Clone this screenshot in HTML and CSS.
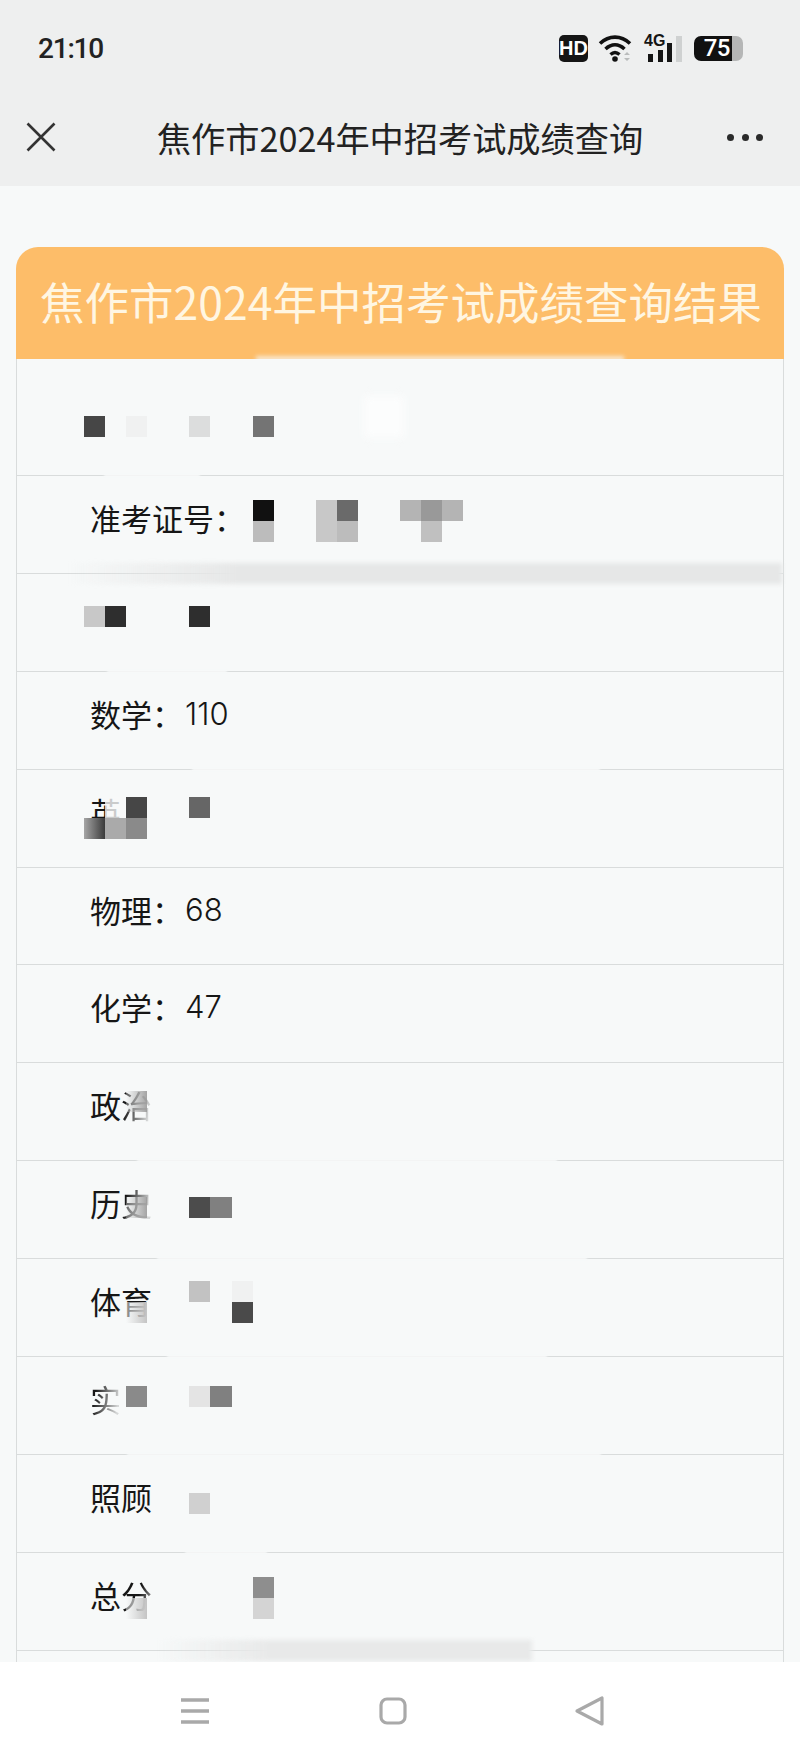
FILE: index.html
```html
<!DOCTYPE html>
<html lang="zh-CN">
<head>
    <meta charset="UTF-8">
    <meta name="viewport" content="width=device-width, initial-scale=1.0">
    <title>焦作市2024年中招考试成绩查询</title>
    <link rel="stylesheet" href="styles.css">
</head>
<body>

<div class="phone">
    <!-- Status bar -->
    <div class="status-bar">
        <span class="clock">21:10</span>
        <div class="status-icons">
            <span class="hd-badge">HD</span>
            <svg class="wifi-icon" width="36" height="30" viewBox="0 0 36 30">
                <path d="M2 10.5C11 2 23 2 32 10.5" fill="none" stroke="#111" stroke-width="3.6"/>
                <path d="M7.5 16C13.5 10.5 20.5 10.5 26.5 16" fill="none" stroke="#111" stroke-width="3.6"/>
                <path d="M12.5 21.5C15.5 18.8 18.5 18.8 21.5 21.5" fill="none" stroke="#111" stroke-width="3.4"/>
                <circle cx="17" cy="26" r="2.8" fill="#111"/>
                <path d="M26 22l3-3 3 3zM26 25l3 3 3-3z" fill="#b9bbbb"/>
            </svg>
            <div class="signal">
                <span class="signal-type">4G</span>
                <i class="bar bar-1"></i>
                <i class="bar bar-2"></i>
                <i class="bar bar-3"></i>
                <i class="bar bar-4"></i>
            </div>
            <div class="battery">
                <span class="battery-level">75</span>
                <i class="battery-rest"></i>
            </div>
        </div>
    </div>

    <!-- Title bar -->
    <div class="nav-bar">
        <svg class="close-icon" width="30" height="30" viewBox="0 0 30 30">
            <path d="M1.5 1.5L28.5 28.5M28.5 1.5L1.5 28.5" fill="none" stroke="#333" stroke-width="2.6"/>
        </svg>
        <h1 class="nav-title">焦作市2024年中招考试成绩查询</h1>
        <div class="more-dots"><i></i><i></i><i></i></div>
    </div>

    <!-- Result table -->
    <div class="content">
        <div class="result-card">
            <div class="card-head">
                <h2>焦作市2024年中招考试成绩查询结果</h2>
                <i class="smear smear-head"></i>
            </div>

            <div class="score-row first-row">
                <div class="mosaic m-name">
                    <i class="c0 k44"></i><i class="c2 kf0"></i><i class="c5 kdc"></i><i class="c8 k74"></i>
                </div>
                <i class="smear smear-name"></i>
                <i class="gap gap-name"></i>
            </div>
            <div class="score-row">
                <span>准考证号：</span>
                <div class="mosaic m-ticket">
                    <i class="c8 k11"></i><i class="c8 r2 kbb"></i>
                    <i class="c11 kc8"></i><i class="c11 r2 kc8"></i>
                    <i class="c12 k6a"></i><i class="c12 r2 kbb"></i>
                    <i class="c15 kb4"></i><i class="c16 k99"></i><i class="c17 kb4"></i>
                    <i class="c16 r2 kc0"></i>
                </div>
                <i class="smear smear-ticket"></i>
            </div>
            <div class="score-row">
                <div class="mosaic m-chinese">
                    <i class="c0 kc8"></i><i class="c1 k2e"></i><i class="c5 k2e"></i>
                </div>
                <i class="gap gap-chinese"></i>
            </div>
            <div class="score-row">
                <span>数学：</span><span class="num">110</span>
                <i class="gap gap-math"></i>
            </div>
            <div class="score-row">
                <span>英</span>
                <div class="mosaic m-english">
                    <i class="c1 kfade-soft"></i><i class="c2 k44"></i><i class="c5 k66"></i>
                    <i class="c0 r2 kfade-dark"></i><i class="c1 r2 kaa"></i><i class="c2 r2 k8a"></i>
                </div>
            </div>
            <div class="score-row"><span>物理：</span><span class="num">68</span></div>
            <div class="score-row"><span>化学：</span><span class="num">47</span></div>
            <div class="score-row">
                <span>政<em class="fade-char">治</em></span>
                <div class="mosaic m-politics">
                    <i class="c2 kfade"></i>
                </div>
                <i class="gap gap-politics"></i>
            </div>
            <div class="score-row">
                <span>历<em class="fade-char">史</em></span>
                <div class="mosaic m-history">
                    <i class="c2 kfade"></i><i class="c5 k4c"></i><i class="c6 k80"></i>
                </div>
                <i class="gap gap-history"></i>
            </div>
            <div class="score-row">
                <span>体育</span>
                <div class="mosaic m-sports">
                    <i class="c5 kc2"></i><i class="c7 kf0"></i><i class="c7 r2 k4a"></i>
                    <i class="c2 r2 kfade-light"></i>
                </div>
                <i class="gap gap-sports"></i>
            </div>
            <div class="score-row">
                <span class="fade-char">实</span>
                <div class="mosaic m-lab">
                    <i class="c2 k88"></i><i class="c5 ke4"></i><i class="c6 k80"></i>
                </div>
                <i class="gap gap-lab"></i>
            </div>
            <div class="score-row">
                <span>照顾</span>
                <div class="mosaic m-care">
                    <i class="c5 kd0"></i>
                </div>
                <i class="gap gap-care"></i>
            </div>
            <div class="score-row">
                <span>总<em class="fade-char fade-char-soft">分</em></span>
                <div class="mosaic m-total">
                    <i class="c8 k8e"></i><i class="c8 r2 kd4"></i><i class="c2 r2 kfade-light"></i>
                </div>
                <i class="smear smear-total"></i>
            </div>
            <div class="score-row"></div>
        </div>
    </div>

    <!-- Android navigation -->
    <div class="system-nav">
        <svg width="28" height="26" viewBox="0 0 28 26">
            <path d="M0 2H28M0 13H28M0 24H28" fill="none" stroke="#a9a9a9" stroke-width="3.4"/>
        </svg>
        <svg width="28" height="28" viewBox="0 0 28 28">
            <rect x="2" y="2" width="24" height="24" rx="6" fill="none" stroke="#a9a9a9" stroke-width="3.2"/>
        </svg>
        <svg width="30" height="32" viewBox="0 0 30 32">
            <path d="M28 3V29L3 16Z" fill="none" stroke="#a9a9a9" stroke-width="3.2" stroke-linejoin="round"/>
        </svg>
    </div>
</div>

</body>
</html>
```

FILE: styles.css
```css
* {
    box-sizing: border-box;
}
body {
    margin: 0;
    font-family: "Noto Sans CJK SC", "Noto Sans", sans-serif;
    color: #1c1c1c;
}
.phone {
    display: flex;
    flex-direction: column;
    height: 100vh;
    overflow: hidden;
    background-color: #f7f9f9;
}

/* status bar */
.status-bar {
    display: flex;
    align-items: center;
    justify-content: space-between;
    height: 92px;
    padding: 4px 57px 0 38px;
    background-color: #eeefef;
}
.clock {
    font-family: Roboto, sans-serif;
    font-size: 28px;
    font-weight: 500;
    letter-spacing: -1.2px;
    color: #222222;
}
.status-icons {
    display: flex;
    align-items: center;
}
.hd-badge {
    width: 29px;
    height: 27px;
    border-radius: 5px;
    background-color: #151515;
    color: #ffffff;
    font-family: "Liberation Sans Narrow", "Liberation Sans", sans-serif;
    font-size: 20px;
    font-weight: 700;
    line-height: 27px;
    text-align: center;
}
.wifi-icon {
    margin-left: 10px;
}
.signal {
    position: relative;
    width: 40px;
    height: 27px;
    margin-left: 10px;
}
.signal-type {
    position: absolute;
    left: 0;
    top: -1px;
    font-family: "Liberation Sans Narrow", "Liberation Sans", sans-serif;
    font-size: 16px;
    font-weight: 700;
    line-height: 14px;
    color: #151515;
}
.bar {
    position: absolute;
    bottom: 0;
    width: 5px;
    background-color: #151515;
}
.bar-1 { left: 4px; height: 8px; }
.bar-2 { left: 14px; height: 12px; }
.bar-3 { left: 23px; height: 19px; }
.bar-4 { left: 32px; height: 26px; width: 6px; background-color: #cfd1d1; }
.battery {
    display: flex;
    width: 49px;
    height: 25px;
    margin-left: 10px;
}
.battery-level {
    width: 38px;
    border-radius: 7px 0 0 7px;
    background-color: #111111;
    color: #ffffff;
    font-family: Roboto, sans-serif;
    font-size: 24px;
    font-weight: 500;
    line-height: 25px;
    text-align: right;
    padding-right: 2px;
    letter-spacing: -0.5px;
}
.battery-rest {
    width: 11px;
    border-radius: 0 7px 7px 0;
    background-color: #b5b6b6;
}

/* title bar */
.nav-bar {
    display: flex;
    align-items: center;
    justify-content: space-between;
    height: 94px;
    padding: 0 37px 4px 26px;
    background-color: #eeefef;
}
.close-icon {
    flex-shrink: 0;
}
.nav-title {
    margin: 0 0 0 17px;
    font-size: 34.2px;
    font-weight: 400;
    line-height: 46px;
    color: #222222;
}
.more-dots {
    display: flex;
    gap: 7.5px;
}
.more-dots i {
    width: 7px;
    height: 7px;
    border-radius: 50%;
    background-color: #2a2a2a;
}

/* result table */
.content {
    flex: 1;
    min-height: 0;
    overflow: hidden;
    padding: 61px 16px 0;
}
.card-head {
    position: relative;
    height: 112px;
    border-radius: 22px 22px 0 0;
    background-color: #fdbd69;
    overflow: hidden;
}
.card-head h2 {
    margin: 0;
    padding: 24px 0 0 2px;
    font-size: 44.5px;
    font-weight: 400;
    line-height: 60px;
    text-align: center;
    color: #fff6e2;
    white-space: nowrap;
}
.score-row {
    position: relative;
    display: flex;
    align-items: center;
    height: 97.9px;
    padding: 0 0 14px 73px;
    border: 1px solid #d9dcdc;
    border-top: none;
    font-size: 31px;
    color: #161616;
}
.first-row {
    height: 117px;
}
.num {
    margin-left: 2px;
    font-family: Inter, sans-serif;
    font-size: 31px;
    font-weight: 300;
}
.fade-char {
    font-style: normal;
    color: transparent;
    background: linear-gradient(100deg, #161616 20%, rgba(22, 22, 22, 0.15) 85%);
    -webkit-background-clip: text;
    background-clip: text;
}
.fade-char-soft {
    background: linear-gradient(110deg, #161616 55%, rgba(22, 22, 22, 0.3) 95%);
    -webkit-background-clip: text;
    background-clip: text;
}

/* pixelated blocks over the text */
.mosaic {
    position: absolute;
    left: 67px;
    display: grid;
    grid-template-columns: repeat(18, 21.08px);
    grid-auto-rows: 21.1px;
}
.mosaic i {
    grid-row: 1;
}
.mosaic i.r2 {
    grid-row: 2;
}
.m-name { top: 57px; }
.m-ticket { top: 24px; }
.m-chinese { top: 32px; }
.m-english { top: 27px; }
.m-politics { top: 28px; }
.m-history { top: 36px; }
.m-sports { top: 22px; }
.m-lab { top: 29px; }
.m-care { top: 38px; }
.m-total { top: 24px; }

.c0 { grid-column: 1; }
.c1 { grid-column: 2; }
.c2 { grid-column: 3; }
.c5 { grid-column: 6; }
.c6 { grid-column: 7; }
.c7 { grid-column: 8; }
.c8 { grid-column: 9; }
.c11 { grid-column: 12; }
.c12 { grid-column: 13; }
.c15 { grid-column: 16; }
.c16 { grid-column: 17; }
.c17 { grid-column: 18; }

.k11 { background-color: #111111; }
.k2e { background-color: #2e2e2e; }
.k44 { background-color: #464646; }
.k4a { background-color: #4a4a4a; }
.k4c { background-color: #4c4c4c; }
.k66 { background-color: #666666; }
.k6a { background-color: #6a6a6a; }
.k74 { background-color: #747474; }
.k80 { background-color: #808080; }
.k88 { background-color: #8a8a8a; }
.k8a { background-color: #8a8a8a; }
.k8e { background-color: #8e8e8e; }
.k99 { background-color: #999999; }
.kaa { background-color: #aaaaaa; }
.kb4 { background-color: #b4b4b4; }
.kbb { background-color: #bcbcbc; }
.kc0 { background-color: #c0c0c0; }
.kc2 { background-color: #c2c2c2; }
.kc8 { background-color: #c8c8c8; }
.kd0 { background-color: #d0d0d0; }
.kd4 { background-color: #d4d4d4; }
.kdc { background-color: #dcdddd; }
.ke4 { background-color: #e4e4e4; }
.kf0 { background-color: #f0f1f1; }
.kfade { background: linear-gradient(90deg, rgba(247, 249, 249, 0.3), rgba(155, 155, 155, 0.9)); }
.kfade-soft { background-color: rgba(247, 249, 249, 0.8); }
.kfade-dark { background: linear-gradient(90deg, #a6a6a6, #3a3a3a); }
.kfade-light { background: linear-gradient(90deg, rgba(247, 249, 249, 0.5), #c4c4c4); }

/* retouched strips */
.smear {
    position: absolute;
    filter: blur(2px);
}
.smear-head {
    left: 240px;
    right: 160px;
    bottom: -3px;
    height: 6px;
    background-color: rgba(247, 249, 249, 0.7);
}
.smear-name {
    left: 347px;
    top: 37px;
    width: 40px;
    height: 42px;
    background-color: #fcfdfd;
    filter: blur(4px);
}
.smear-ticket {
    left: 50px;
    right: 1px;
    bottom: -11px;
    height: 21px;
    background: linear-gradient(90deg, rgba(230, 231, 231, 0), #e6e7e7 24%);
}
.smear-total {
    left: 140px;
    width: 375px;
    bottom: -11px;
    height: 21px;
    background: linear-gradient(90deg, rgba(232, 233, 233, 0), #e8e9e9 30%);
}
.gap {
    position: absolute;
    bottom: -2px;
    height: 3px;
    background-color: #f7f9f9;
    filter: blur(1px);
}
.gap-name { left: 87px; width: 96px; }
.gap-chinese { left: 90px; width: 120px; }
.gap-math { left: 175px; width: 408px; }
.gap-politics { left: 120px; width: 420px; }
.gap-history { left: 140px; width: 430px; }
.gap-sports { left: 150px; width: 380px; }
.gap-lab { left: 110px; width: 474px; }
.gap-care { left: 168px; width: 82px; }

/* android navigation */
.system-nav {
    display: flex;
    align-items: center;
    flex-shrink: 0;
    height: 98px;
    padding-left: 181px;
    background-color: #ffffff;
}
.system-nav svg:nth-child(2) {
    margin-left: 170px;
}
.system-nav svg:nth-child(3) {
    margin-left: 167px;
}
```
